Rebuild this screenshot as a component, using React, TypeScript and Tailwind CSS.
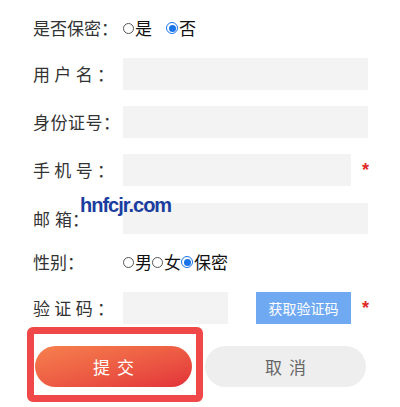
import React from "react";

const font = { fontFamily: '"Noto Sans CJK SC", "Noto Sans", sans-serif' };

function Label({ chars, justify }: { chars: string[]; justify?: boolean }) {
  if (justify) {
    return (
      <div className="w-[90px] shrink-0">
        <div className="flex w-[81px] justify-between text-[17px] text-[#333]">
          {chars.map((c, i) => (
            <span key={i} className="w-[17px] text-left">
              {c}
            </span>
          ))}
        </div>
      </div>
    );
  }
  return (
    <div className="w-[90px] shrink-0 text-[17px] text-[#333] whitespace-pre">
      {chars.join("")}
    </div>
  );
}

function Radio({ checked }: { checked?: boolean }) {
  return checked ? (
    <span className="inline-flex w-[12px] h-[12px] rounded-full border-[1.5px] border-[#1a73e8] bg-white items-center justify-center">
      <span className="w-[7px] h-[7px] rounded-full bg-[#1a73e8]" />
    </span>
  ) : (
    <span className="inline-block w-[11px] h-[11px] rounded-full border border-[#555] bg-white" />
  );
}

function Star() {
  return (
    <span
      className="ml-[11px] text-[#e02a2a] text-[18px] font-bold leading-none"
      style={{ fontFamily: '"Liberation Sans", Arial, sans-serif' }}
    >
      *
    </span>
  );
}

export default function App() {
  return (
    <div className="relative w-[400px] h-[407px] bg-white overflow-hidden" style={font}>
      <div className="pl-[33px] flex flex-col">
        <div className="mt-[12px] h-[32px] flex items-center">
          <Label chars={["是", "否", "保", "密", "："]} />
          <div className="flex items-center text-[17px] text-[#111]">
            <Radio />
            <span className="ml-[1px]">是</span>
            <span className="ml-[14px]" />
            <Radio checked />
            <span className="ml-[1px]">否</span>
          </div>
        </div>

        <div className="mt-[14px] h-[32px] flex items-center">
          <Label chars={["用", "户", "名", "："]} justify />
          <div className="w-[245px] h-[32px] bg-[#f3f3f3]" />
        </div>

        <div className="mt-[16px] h-[32px] flex items-center">
          <div className="w-[90px] shrink-0 text-[17px] text-[#333] tracking-[0.5px]">身份证号：</div>
          <div className="w-[245px] h-[32px] bg-[#f3f3f3]" />
        </div>

        <div className="mt-[16px] h-[32px] flex items-center">
          <Label chars={["手", "机", "号", "："]} justify />
          <div className="w-[228px] h-[32px] bg-[#f3f3f3]" />
          <Star />
        </div>

        <div className="mt-[16px] h-[32px] flex items-center">
          <div className="w-[90px] shrink-0 text-[17px] text-[#333] pt-[2px]">
            邮<span className="ml-[5px]">箱：</span>
          </div>
          <div className="w-[245px] h-[31px] bg-[#f3f3f3]" />
        </div>

        <div className="mt-[12px] h-[32px] flex items-center">
          <Label chars={["性", "别", "："]} />
          <div className="flex items-center text-[17px] text-[#111]">
            <Radio />
            <span className="ml-[1px]">男</span>
            <Radio />
            <span className="ml-[1px]">女</span>
            <Radio checked />
            <span className="ml-[1px]">保密</span>
          </div>
        </div>

        <div className="mt-[14px] h-[32px] flex items-center">
          <Label chars={["验", "证", "码", "："]} justify />
          <div className="w-[105px] h-[32px] bg-[#f3f3f3]" />
          <div className="ml-[28px] w-[95px] h-[32px] bg-[#6fa9f2] text-white text-[14px] flex items-center justify-center">
            获取验证码
          </div>
          <Star />
        </div>

        <div className="mt-[22px] h-[41px] flex items-center">
          <div className="ml-[2px] w-[157px] h-[41px] rounded-full bg-gradient-to-br from-[#f6804e] to-[#e2303a] text-white text-[17px] tracking-[7px] pl-[7px] flex items-center justify-center">
            提交
          </div>
          <div className="ml-[13px] w-[161px] h-[41px] rounded-full bg-[#eeeeee] text-[#666] text-[17px] tracking-[7px] pl-[7px] flex items-center justify-center">
            取消
          </div>
        </div>
      </div>

      <div className="absolute left-[27px] top-[327px] w-[176px] h-[75px] border-[7px] border-[#f04848] rounded-[6px]" />

      <div
        className="absolute left-[80px] top-[195px] text-[20px] font-bold text-[#1a3d9e] leading-none tracking-[-1px]"
        style={{ fontFamily: '"Liberation Sans", Arial, sans-serif' }}
      >
        hnfcjr.com
      </div>
    </div>
  );
}
